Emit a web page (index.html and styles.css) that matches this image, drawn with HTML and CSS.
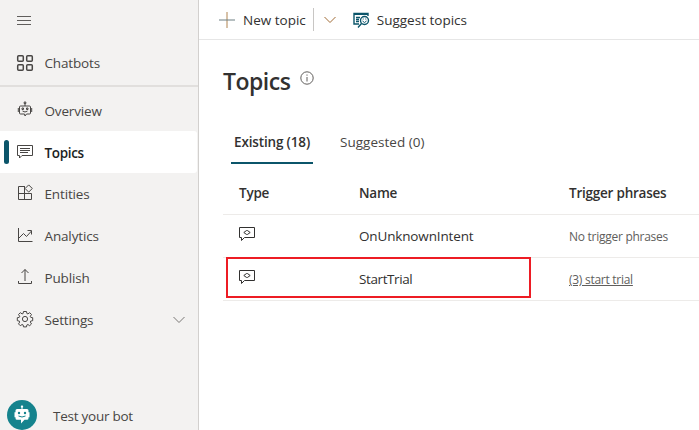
FILE: index.html
```html
<!DOCTYPE html>
<html lang="en">
<head>
<meta charset="utf-8">
<title>Topics</title>
<link rel="stylesheet" href="styles.css">
</head>
<body>
<div class="app">
  <nav class="sidebar">
    <button class="menu" aria-label="Menu"><svg width="14" height="10" viewBox="0 0 14 10"><path d="M0 .5h14M0 4.5h14M0 8.5h14"/></svg></button>
    <a class="item chatbots">
      <svg class="icon grid" width="18" height="18" viewBox="0 0 18 18"><rect x="1.7" y="1.7" width="5.6" height="5.6" rx="1"/><rect x="10.700" y="1.7" width="5.6" height="5.6" rx="1"/><rect x="1.7" y="10.700" width="5.6" height="5.6" rx="1"/><rect x="10.700" y="10.700" width="5.6" height="5.6" rx="1"/></svg>
      <span class="t-chatbots">Chatbots</span></a>
    <div class="list">
      <a class="item">
        <svg class="icon" width="18" height="18" viewBox="0 0 18 18"><path d="M9 2v3M4.5 5h9q1 0 1 1v6q0 1-1 1h-3L9 15l-.5-2h-4q-1 0-1-1V6q0-1 1-1zM2.3 7v4M15.7 7v4M6.5 10q2.5 2 5 0"/><path class="solid" d="M8.2 1h1.6v1.6H8.2zM6 7h1.5v1.500H6zM10.500 7H12v1.500h-1.500z"/></svg>
        <span class="t-overview">Overview</span></a>
      <a class="item active">
        <svg class="icon" width="18" height="18" viewBox="0 0 18 18"><path d="M1.500 2.500h15v10H6L3.500 15v-2.500h-2zM4 5.500h10M4 7.500h10M4 9.500h8"/></svg>
        <span class="t-topics">Topics</span></a>
      <a class="item">
        <svg class="icon" width="18" height="18" viewBox="0 0 18 18"><path d="M9 2.500H2.500v13h13V9.500M2.500 9.500h13M8.500 2.500v13M12.700.9l3.600 3.600-3.600 3.600-3.600-3.600z"/></svg>
        <span class="t-entities">Entities</span></a>
      <a class="item">
        <svg class="icon" width="18" height="18" viewBox="0 0 18 18"><path d="M2.500 2v13.500H16.500M3 12l4.500-4.500 3 3L15.500 5M11.500 4.500h4v4"/></svg>
        <span class="t-analytics">Analytics</span></a>
      <a class="item">
        <svg class="icon" width="18" height="18" viewBox="0 0 18 18"><path d="M9 13V1.500M5.500 5L9 1.500 12.500 5M2.500 13v2.500h13V13"/></svg>
        <span class="t-publish">Publish</span></a>
      <a class="item">
        <svg class="icon" width="18" height="18" viewBox="0 0 18 18"><path d="M7.500 1.500h3l.4 2 1 .4 1.800-1.200 1.800 1.800-1.200 1.800.4 1 2 .4v3l-2 .4-.4 1 1.200 1.800-1.800 1.800-1.800-1.200-1 .4-.4 2h-3l-.4-2-1-.4-1.800 1.200-1.800-1.800 1.200-1.800-.4-1-2-.4v-3l2-.4.4-1-1.200-1.800 1.800-1.800 1.800 1.200 1-.4z"/><circle cx="9" cy="9" r="2.600"/></svg>
        <span class="t-settings">Settings</span>
        <svg class="chevron" width="12" height="8" viewBox="0 0 12 8"><path d="M.5 1L6 6.500 11.500 1"/></svg></a>
    </div>
    <a class="test">
      <svg width="30" height="30" viewBox="0 0 30 30"><circle class="disc" cx="15" cy="15" r="15"/><path class="bot" d="M14.500 9V7.800a1.200 1.200 0 1 1 1 0V9H20q1.500 0 1.500 1.500v1.700h1v5h-1v1q0 1.500-1.500 1.500h-2.500L14 23.500v-3.800h-4q-1.500 0-1.500-1.500v-1h-1v-5h1v-1.700Q8.500 9 10 9z"/><circle class="disc" cx="12" cy="13" r="1.200"/><circle class="disc" cx="18" cy="13" r="1.200"/><path class="smile" d="M11.500 16q3.500 2 7 0"/></svg>
      <span class="t-test">Test your bot</span></a>
  </nav>
  <main>
    <header>
      <svg class="plus" width="16" height="16" viewBox="0 0 16 16"><path class="upright" d="M8 0v16"/><path class="level" d="M0 8h16"/></svg>
      <span class="t-new">New topic</span>
      <i class="divider"></i>
      <svg class="drop" width="12" height="8" viewBox="0 0 12 8"><path d="M.5 1L6 6.500 11.500 1"/></svg>
      <svg class="suggest" width="17" height="16" viewBox="0 0 17 16"><path d="M6 12H1V1.500h14V4M1 2.200h14M3 5.500h4M3 7.500h3M3 9.500h3M8.500 11.500L5 15.500"/><circle cx="11.500" cy="8.500" r="4"/><path class="thin" d="M9.500 9q2 3 4 0M9.700 7h1M12.300 7h1"/></svg>
      <span class="t-suggest">Suggest topics</span>
    </header>
    <h1><span class="t-title">Topics</span><svg width="14" height="14" viewBox="0 0 14 14"><circle cx="7" cy="7" r="6.200"/><path d="M7 6v4.500M7 3.500v1.200"/></svg></h1>
    <div class="tabs"><a class="tab on"><span class="t-existing">Existing (18)</span></a><a class="tab"><span class="t-suggested">Suggested (0)</span></a></div>
    <div class="table">
      <div class="row head"><span class="t-type">Type</span><span class="t-name">Name</span><span class="t-trigger">Trigger phrases</span></div>
      <div class="row">
        <svg width="16" height="15" viewBox="0 0 16 15"><path d="M.5 .5h15v10H5.500L2.500 13.500v-3H.5z"/><path d="M7.300 3.700L4.800 5.500l2.500 1.800M8.700 3.700l2.500 1.800-2.500 1.800M7.300 3.700l.7-.4.7.4M7.300 7.300l.7.4.7-.4"/></svg>
        <span class="t-unknown">OnUnknownIntent</span><span class="small t-none">No trigger phrases</span></div>
      <div class="row">
        <svg width="16" height="15" viewBox="0 0 16 15"><path d="M.5 .5h15v10H5.500L2.500 13.500v-3H.5z"/><path d="M7.300 3.700L4.800 5.500l2.500 1.800M8.700 3.700l2.500 1.800-2.500 1.800M7.300 3.700l.7-.4.7.4M7.300 7.300l.7.4.7-.4"/></svg>
        <span class="t-start">StartTrial</span><a class="small link t-phrases">(3) start trial</a>
        <i class="highlight"></i></div>
    </div>
  </main>
</div>
</body>
</html>
```
FILE: styles.css
```css
* { box-sizing: border-box; }
body { margin: 0; background: #fff; color: #323130; font: 13.5px/20px "Open Sans", "Noto Sans", sans-serif; letter-spacing: -.15px; }
svg { display: block; flex: none; fill: none; stroke: #484644; }
span, a { white-space: nowrap; }
.app { display: flex; width: 699px; height: 430px; overflow: hidden; }
.sidebar { width: 199px; flex: none; background: #f3f2f1; border-right: 1px solid #d2d0ce; }
.menu { display: flex; align-items: flex-start; border: 0; padding: 16px 0 0 17px; height: 42px; background: none; }
.menu svg { stroke: #605e5c; }
.item { display: flex; align-items: center; height: 41.8px; padding: 1px 13px 0 16px; color: #484644; }
.item .icon { margin-right: 10.500px; position: relative; top: -1px; }
.item .grid { top: 0; stroke-width: 1.5; }
.chatbots { height: 45px; padding-bottom: 3px; border-bottom: 2px solid #e1dfdd; }
.list { padding-top: 2.500px; }
.active { position: relative; margin-right: 1px; border-radius: 0 3px 3px 0; background: #fff; color: #201f1e; font-weight: 600; }
.active::before { content: ""; position: absolute; left: 4px; top: 9px; width: 5px; height: 24px; border-radius: 3px; background: #0b556a; }
.chevron { margin-left: auto; stroke: #797775; }
.t-topics { letter-spacing: -.35px; }
.test { display: flex; gap: 16px; align-items: center; margin: 60px 0 0 7px; color: #484644; }
.test span { padding-top: 2px; letter-spacing: -.25px; }
.test svg { stroke: none; }
.test .disc { fill: #15838d; }
.test .bot { fill: #fff; }
.test .smile { stroke: #15838d; }
main { flex: 1; min-width: 0; }
header { display: flex; align-items: center; height: 40px; padding-left: 20px; border-bottom: 1px solid #e6e6e6; }
.plus { margin-right: 8px; }
.upright { stroke: #b08450; }
.level { stroke: #6d7e82; }
.t-new { letter-spacing: 0; }
.t-suggest { letter-spacing: 0; }
.divider { width: 1px; height: 23px; margin-left: 7px; background: #c8c6c4; }
.drop { margin-left: 10px; stroke: #a06b35; }
.suggest { margin: 1px 7px 0 17px; stroke: #0b556a; stroke-width: 1.400; }
.thin { stroke-width: 1; }
h1 { display: flex; margin: 25px 0 0 24px; height: 33px; font-size: 23px; line-height: 32px; font-weight: 600; letter-spacing: -.5px; }
h1 svg { margin: 6px 0 0 10px; stroke: #605e5c; }
.tabs { display: flex; height: 43px; margin: 23px 0 0 32px; }
.tab { height: 43px; padding: 11px 4px 0; color: #484644; }
.tab + .tab { margin-left: 23px; }
.on { width: 82px; padding-left: 3px; border-bottom: 2px solid #0b556a; font-weight: 600; color: #323130; }
.t-suggested { letter-spacing: .02px; }
.table { margin: 8px 0 0 24px; }
.row { position: relative; display: grid; grid-template-columns: 120px 210px 1fr; align-items: center; height: 43px; padding-left: 16px; border-bottom: 1px solid #edebe9; }
.row svg { margin-top: -3px; stroke: #323130; }
.head { font-weight: 600; letter-spacing: -.23px; }
.t-start { letter-spacing: -.4px; }
.small { padding-top: 2px; font-size: 12px; letter-spacing: -.27px; color: #605e5c; }
.link { text-decoration: underline; }
.highlight { position: absolute; left: 3px; top: -1px; width: 305px; height: 41px; border: 2px solid #ed1c24; }
```
